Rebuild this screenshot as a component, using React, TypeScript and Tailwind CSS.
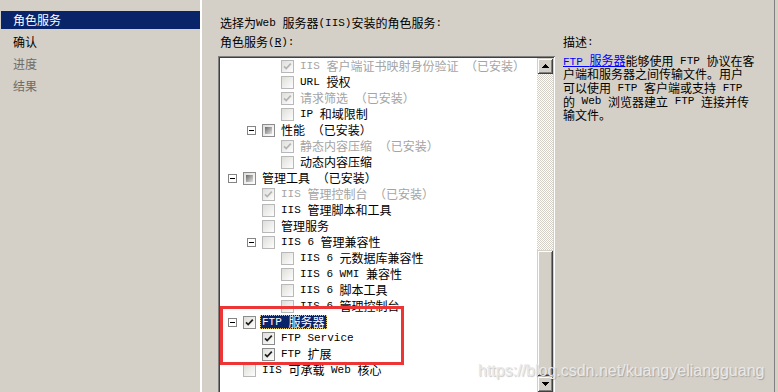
import React from "react";

type Kind = "off" | "on" | "gray" | "ind";

function Mixed({ text }: { text: string }) {
  const parts = text.split(/([\x20-\x7E]+)/).filter((p) => p.length > 0);
  return (
    <>
      {parts.map((p, i) =>
        /^[\x20-\x7E]+$/.test(p) ? (
          <span key={i} className="[font-family:'Liberation_Mono',monospace] text-[11px]">
            {p}
          </span>
        ) : (
          <span key={i}>{p}</span>
        )
      )}
    </>
  );
}

function CheckBox({ kind }: { kind: Kind }) {
  const stroke = kind === "on" || kind === "ind" ? "#8c8c8c" : "#b8b8b8";
  return (
    <svg width="13" height="13" viewBox="0 0 13 13" className="shrink-0 block">
      <defs>
        <linearGradient id="cbfill" x1="0" y1="0" x2="1" y2="1">
          <stop offset="0" stopColor="#dcdcd8" />
          <stop offset="1" stopColor="#ffffff" />
        </linearGradient>
        <linearGradient id="cbind" x1="0" y1="0" x2="1" y2="1">
          <stop offset="0" stopColor="#6a6a6a" />
          <stop offset="1" stopColor="#e2e2e2" />
        </linearGradient>
      </defs>
      <rect x="0.5" y="0.5" width="12" height="12" fill="url(#cbfill)" stroke={stroke} />
      {kind === "ind" && <rect x="3" y="3" width="7" height="7" fill="url(#cbind)" />}
      {(kind === "on" || kind === "gray") && (
        <path
          d="M3 6.3 L5.2 8.6 L9.8 3.6"
          fill="none"
          stroke={kind === "on" ? "#1e1e1e" : "#b4b4b4"}
          strokeWidth="1.7"
        />
      )}
    </svg>
  );
}

function Expander() {
  return (
    <svg width="9" height="9" viewBox="0 0 9 9" className="shrink-0 block">
      <rect x="0.5" y="0.5" width="8" height="8" fill="#ffffff" stroke="#848484" />
      <rect x="2" y="4" width="5" height="1" fill="#000000" />
    </svg>
  );
}

function Arrow({ up }: { up: boolean }) {
  return (
    <svg width="7" height="4" viewBox="0 0 7 4" className="block">
      {up ? (
        <path d="M3 0h1v1H3zM2 1h3v1H2zM1 2h5v1H1zM0 3h7v1H0z" fill="#000" />
      ) : (
        <path d="M0 0h7v1H0zM1 1h5v1H1zM2 2h3v1H2zM3 3h1v1H3z" fill="#000" />
      )}
    </svg>
  );
}

type Row = { level: 0 | 1 | 2; exp?: boolean; cb: Kind; text: string; dim?: boolean; sel?: boolean };

const rows: Row[] = [
  { level: 2, cb: "gray", text: "IIS 客户端证书映射身份验证 （已安装）", dim: true },
  { level: 2, cb: "off", text: "URL 授权" },
  { level: 2, cb: "gray", text: "请求筛选 （已安装）", dim: true },
  { level: 2, cb: "off", text: "IP 和域限制" },
  { level: 1, exp: true, cb: "ind", text: "性能 （已安装）" },
  { level: 2, cb: "gray", text: "静态内容压缩 （已安装）", dim: true },
  { level: 2, cb: "off", text: "动态内容压缩" },
  { level: 0, exp: true, cb: "ind", text: "管理工具 （已安装）" },
  { level: 1, cb: "gray", text: "IIS 管理控制台 （已安装）", dim: true },
  { level: 1, cb: "off", text: "IIS 管理脚本和工具" },
  { level: 1, cb: "off", text: "管理服务" },
  { level: 1, exp: true, cb: "off", text: "IIS 6 管理兼容性" },
  { level: 2, cb: "off", text: "IIS 6 元数据库兼容性" },
  { level: 2, cb: "off", text: "IIS 6 WMI 兼容性" },
  { level: 2, cb: "off", text: "IIS 6 脚本工具" },
  { level: 2, cb: "off", text: "IIS 6 管理控制台" },
  { level: 0, exp: true, cb: "on", text: "FTP 服务器", sel: true },
  { level: 1, cb: "on", text: "FTP Service" },
  { level: 1, cb: "on", text: "FTP 扩展" },
  { level: 0, cb: "off", text: "IIS 可承载 Web 核心" },
];

const indent: Record<number, string> = { 0: "pl-[8px]", 1: "pl-[27px]", 2: "pl-[46px]" };

const raised =
  "bg-[#d4d0c8] shadow-[inset_1px_1px_#d4d0c8,inset_-1px_-1px_#404040,inset_2px_2px_#ffffff,inset_-2px_-2px_#808080]";

export default function App() {
  return (
    <div className="relative w-[778px] h-[392px] overflow-hidden flex bg-[#d4d0c8] text-black text-[12px] [font-family:'Noto_Sans_CJK_SC',sans-serif]">
      {/* left navigation */}
      <div className="w-[200px] shrink-0 pt-[11px] pl-[1px] flex flex-col gap-[4px]">
        <div className="h-[18px] leading-[18px] pl-[12px] bg-[#0a246a] text-white">角色服务</div>
        <div className="h-[18px] leading-[18px] pl-[12px] text-black">确认</div>
        <div className="h-[18px] leading-[18px] pl-[12px] text-[#6e6c66]">进度</div>
        <div className="h-[18px] leading-[18px] pl-[12px] text-[#6e6c66]">结果</div>
      </div>
      <div className="w-[2px] shrink-0 bg-white" />

      {/* content */}
      <div className="flex-1 pl-[16px] pt-[15px]">
        <div className="ml-[2px] h-[16px] flex items-center whitespace-pre">
          <Mixed text="选择为Web 服务器(IIS)安装的角色服务:" />
        </div>
        <div className="flex mt-[3px]">
          <div className="w-[337px] shrink-0">
            <div className="ml-[2px] h-[16px] flex items-center whitespace-pre">
              <span>角色服务</span>
              <span className="[font-family:'Liberation_Mono',monospace] text-[11px]">
                (<span className="underline">R</span>):
              </span>
            </div>
            <div className="mt-[6px] h-[340px] p-[2px] flex shadow-[inset_1px_1px_#808080,inset_-1px_-1px_#ffffff,inset_2px_2px_#404040,inset_-2px_-2px_#d4d0c8]">
              <div className="flex-1 bg-white overflow-hidden">
                {rows.map((r, i) => (
                  <div key={i} className={`h-[16px] flex items-center whitespace-pre ${indent[r.level]}`}>
                    <div className="w-[15px] shrink-0 flex items-center">{r.exp && <Expander />}</div>
                    <CheckBox kind={r.cb} />
                    <span
                      className={
                        r.sel
                          ? "ml-[4px] pl-[1px] pr-[2px] h-[14px] leading-[12px] flex items-center border border-dotted border-[#e8c46a] bg-[#0a246a] text-white"
                          : `ml-[4px] pl-[1px] pr-[2px] h-[14px] leading-[12px] flex items-center border border-transparent ${
                              r.dim ? "text-[#a4a4a4]" : "text-black"
                            }`
                      }
                    >
                      <Mixed text={r.text} />
                    </span>
                  </div>
                ))}
              </div>
              <div className="w-[16px] shrink-0 flex flex-col">
                <div className={`h-[16px] flex items-center justify-center ${raised}`}>
                  <Arrow up />
                </div>
                <div className="h-[176px] bg-[repeating-conic-gradient(#d4d0c8_0%_25%,#ffffff_0%_50%)] bg-[length:2px_2px]" />
                <div className={`h-[126px] ${raised}`} />
                <div className={`h-[16px] flex items-center justify-center ${raised}`}>
                  <Arrow up={false} />
                </div>
              </div>
            </div>
          </div>

          {/* description */}
          <div className="ml-[8px] w-[200px]">
            <div className="h-[16px] flex items-center">
              <span>描述</span>
              <span className="[font-family:'Liberation_Mono',monospace] text-[11px]">:</span>
            </div>
            <div className="mt-[4px] whitespace-pre">
              <div className="h-[13.6px] flex items-center">
                <span className="text-[#0000ff] underline">
                  <Mixed text="FTP 服务器" />
                </span>
                <Mixed text="能够使用 FTP 协议在客" />
              </div>
              <div className="h-[13.6px] flex items-center">户端和服务器之间传输文件。用户</div>
              <div className="h-[13.6px] flex items-center">
                <Mixed text="可以使用 FTP 客户端或支持 FTP" />
              </div>
              <div className="h-[13.6px] flex items-center">
                <Mixed text="的 Web 浏览器建立 FTP 连接并传" />
              </div>
              <div className="h-[13.6px] flex items-center">输文件。</div>
            </div>
          </div>
        </div>
      </div>
      <div className="w-[1px] shrink-0 bg-[#808080]" />
      <div className="w-[3px] shrink-0 bg-[#d4d0c8]" />

      {/* annotation rectangle */}
      <div className="absolute left-[220px] top-[306px] w-[184px] h-[59px] border-[3px] border-[#ee3535]" />

      {/* watermark */}
      <div className="absolute left-[478px] top-[362px] leading-[18px] text-[16px] text-[#e9e9e9] whitespace-pre [font-family:'Liberation_Sans',sans-serif] [text-shadow:1px_1px_1px_rgba(0,0,0,0.22)]">
        https://blog.csdn.net/kuangyeliangguang
      </div>
    </div>
  );
}
